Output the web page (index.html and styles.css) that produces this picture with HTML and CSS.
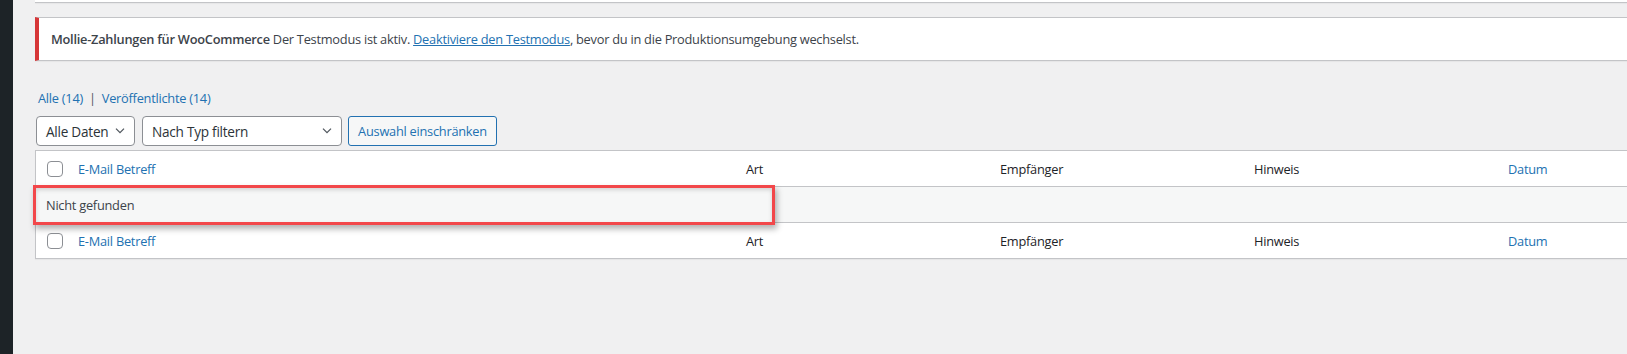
FILE: index.html
```html
<!DOCTYPE html>
<html lang="de">
<head>
    <meta charset="UTF-8">
    <title>E-Mail Protokoll</title>
    <link rel="stylesheet" href="styles.css">
</head>
<body>
    <div id="admin">
        <div id="menu"></div>
        <div id="content">
            <div class="topbox"></div>
            <div class="notice">
                <p><strong>Mollie-Zahlungen für WooCommerce</strong> Der Testmodus ist aktiv. <a href="#">Deaktiviere den Testmodus</a>, bevor du in die Produktionsumgebung wechselst.</p>
            </div>
            <ul class="subsubsub">
                <li><a href="#">Alle <span class="count">(14)</span></a></li>
                <li class="sep">|</li>
                <li><a href="#">Veröffentlichte <span class="count">(14)</span></a></li>
            </ul>
            <div class="tablenav">
                <div class="select sel-date">
                    <span>Alle Daten</span>
                    <svg width="16" height="16" viewBox="0 0 20 20"><path d="M5 7l5 5 5-5" fill="none" stroke="#50575e" stroke-width="1.6"/></svg>
                </div>
                <div class="select sel-type">
                    <span>Nach Typ filtern</span>
                    <svg width="16" height="16" viewBox="0 0 20 20"><path d="M5 7l5 5 5-5" fill="none" stroke="#50575e" stroke-width="1.6"/></svg>
                </div>
                <div class="button">Auswahl einschränken</div>
            </div>
            <div class="listtable">
                <div class="row head">
                    <div class="cell cb"><span class="check"></span></div>
                    <div class="cell link">E-Mail Betreff</div>
                    <div class="cell">Art</div>
                    <div class="cell">Empfänger</div>
                    <div class="cell">Hinweis</div>
                    <div class="cell link">Datum</div>
                </div>
                <div class="row empty">
                    <div class="cell">Nicht gefunden</div>
                </div>
                <div class="row foot">
                    <div class="cell cb"><span class="check"></span></div>
                    <div class="cell link">E-Mail Betreff</div>
                    <div class="cell">Art</div>
                    <div class="cell">Empfänger</div>
                    <div class="cell">Hinweis</div>
                    <div class="cell link">Datum</div>
                </div>
                <div class="mark"></div>
            </div>
        </div>
    </div>
</body>
</html>
```

FILE: styles.css
```css
*{
    margin:0;
    padding:0;
    box-sizing: border-box;
}
html,body{
    height: 100%;
    overflow: hidden;
}
body{
    background-color: #f0f0f1;
    color: #3c434a;
    font-family: "Open Sans", "Noto Sans", sans-serif;
    font-size: 12.8px;
    letter-spacing: -0.25px;
}
a{
    color: #2271b1;
}
#admin{
    display: flex;
    height: 100%;
}
#menu{
    width: 13px;
    flex: none;
    background-color: #1d2327;
}
#content{
    flex: none;
    width: 1800px;
    padding-left: 22px;
}
.topbox{
    height: 3px;
    background-color: #fff;
    border-bottom: 1px solid #c3c4c7;
    box-shadow: 0 1px 1px rgba(0,0,0,.04);
}
.notice{
    margin-top: 14px;
    height: 44px;
    background-color: #fff;
    border: 1px solid #c3c4c7;
    border-left: 4px solid #d63638;
    border-right: 0;
    padding: 0 12px;
    display: flex;
    align-items: center;
    box-shadow: 0 1px 1px rgba(0,0,0,.04);
}
.notice strong{
    font-weight: 600;
}
.subsubsub{
    list-style: none;
    display: flex;
    gap: 6px;
    margin: 28px 0 0 3px;
    height: 18px;
    line-height: 18px;
}
.subsubsub a{
    text-decoration: none;
}
.subsubsub .sep{
    color: #50575e;
}
.tablenav{
    display: flex;
    gap: 7px;
    margin-top: 9px;
    margin-left: 1px;
    height: 30px;
}
.select{
    display: flex;
    align-items: center;
    justify-content: space-between;
    height: 30px;
    padding: 0 6px 0 9px;
    background-color: #fff;
    border: 1px solid #8c8f94;
    border-radius: 4px;
    color: #2c3338;
    font-size: 13.6px;
    white-space: nowrap;
}
.sel-date{
    width: 99px;
}
.sel-type{
    width: 200px;
}
.button{
    height: 30px;
    width: 149px;
    margin-left: -1px;
    line-height: 28px;
    text-align: center;
    color: #2271b1;
    background-color: #f6f7f7;
    border: 1px solid #2271b1;
    border-radius: 3px;
    white-space: nowrap;
}
.listtable{
    position: relative;
    margin-top: 4px;
    background-color: #fff;
    border: 1px solid #c3c4c7;
    border-right: 0;
    box-shadow: 0 1px 1px rgba(0,0,0,.04);
}
.row{
    display: grid;
    grid-template-columns: 34px 668px 254px 254px 254px 254px;
    height: 36px;
    align-items: center;
    color: #1d2327;
}
.row.head{
    border-bottom: 1px solid #c3c4c7;
}
.row.foot{
    border-top: 1px solid #c3c4c7;
    height: 36px;
}
.row.empty{
    display: flex;
    height: 35px;
    background-color: #f6f7f7;
    color: #3c434a;
}
.cell{
    padding: 0 8px;
}
.row.empty .cell{
    padding-left: 10px;
}
.cell.link{
    color: #2271b1;
}
.cell.cb{
    padding: 0 0 0 11px;
    display: flex;
}
.check{
    width: 16px;
    height: 16px;
    border: 1px solid #8c8f94;
    border-radius: 4px;
    background-color: #fff;
}
.mark{
    position: absolute;
    left: -3px;
    top: 34px;
    width: 742px;
    height: 40px;
    border: 3px solid #f2474a;
    box-shadow: 2px 4px 6px rgba(0,0,0,.3), inset 0 2px 4px rgba(0,0,0,.15);
}
```
